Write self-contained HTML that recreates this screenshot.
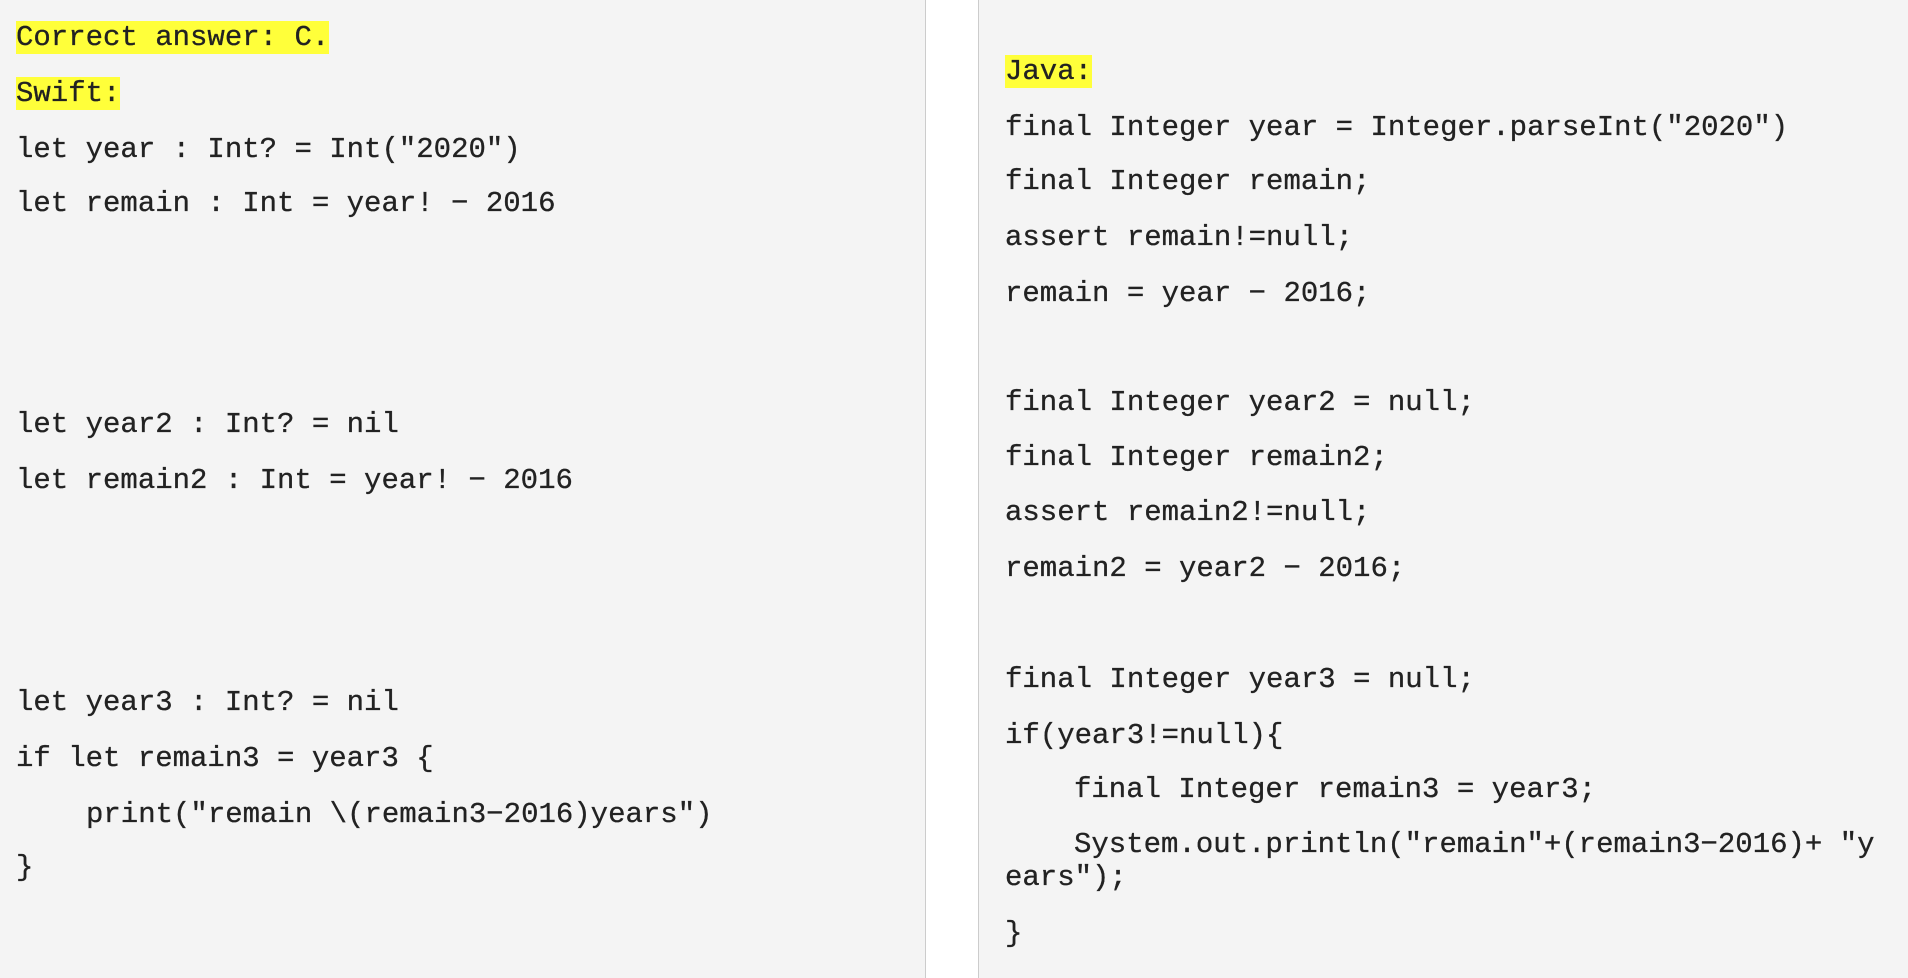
<!DOCTYPE html>
<html><head><meta charset="utf-8"><style>
html,body{margin:0;padding:0;width:1908px;height:978px;overflow:hidden;background:#f4f4f4}
.l{position:absolute;font-family:"Liberation Mono","DejaVu Sans Mono",monospace;font-size:29px;line-height:38px;height:38px;color:#222;white-space:pre;-webkit-text-stroke:0.3px #222}
.h{background:#ffff3a}
#w{position:absolute;left:925px;top:0;width:54px;height:978px;background:#fff;border-left:1px solid #ccc;border-right:1px solid #ccc;box-sizing:border-box}
</style></head><body>
<div id="w"></div>
<div class="l" style="left:16px;top:19px"><span class="h">Correct answer: C.</span></div>
<div class="l" style="left:16px;top:75px"><span class="h">Swift:</span></div>
<div class="l" style="left:16px;top:131px">let year : Int? = Int("2020")</div>
<div class="l" style="left:16px;top:185px">let remain : Int = year! − 2016</div>
<div class="l" style="left:16px;top:406px">let year2 : Int? = nil</div>
<div class="l" style="left:16px;top:462px">let remain2 : Int = year! − 2016</div>
<div class="l" style="left:16px;top:684px">let year3 : Int? = nil</div>
<div class="l" style="left:16px;top:740px">if let remain3 = year3 {</div>
<div class="l" style="left:86px;top:796px">print("remain \(remain3−2016)years")</div>
<div class="l" style="left:16px;top:849px">}</div>

<div class="l" style="left:1005px;top:53px"><span class="h">Java:</span></div>
<div class="l" style="left:1005px;top:109px">final Integer year = Integer.parseInt("2020")</div>
<div class="l" style="left:1005px;top:163px">final Integer remain;</div>
<div class="l" style="left:1005px;top:219px">assert remain!=null;</div>
<div class="l" style="left:1005px;top:275px">remain = year − 2016;</div>
<div class="l" style="left:1005px;top:384px">final Integer year2 = null;</div>
<div class="l" style="left:1005px;top:439px">final Integer remain2;</div>
<div class="l" style="left:1005px;top:494px">assert remain2!=null;</div>
<div class="l" style="left:1005px;top:550px">remain2 = year2 − 2016;</div>
<div class="l" style="left:1005px;top:661px">final Integer year3 = null;</div>
<div class="l" style="left:1005px;top:717px">if(year3!=null){</div>
<div class="l" style="left:1074px;top:771px">final Integer remain3 = year3;</div>
<div class="l" style="left:1074px;top:826px">System.out.println("remain"+(remain3−2016)+ "y</div>
<div class="l" style="left:1005px;top:859px">ears");</div>
<div class="l" style="left:1005px;top:915px">}</div>
</body></html>
